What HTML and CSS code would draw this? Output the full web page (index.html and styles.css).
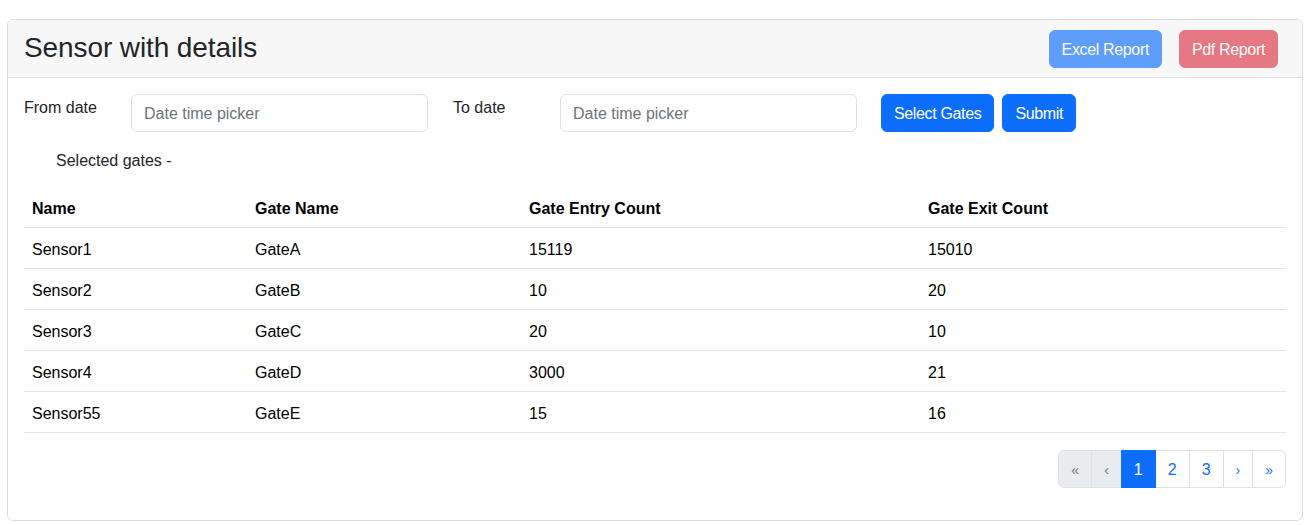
FILE: index.html
```html
<!DOCTYPE html>
<html lang="en">
<head>
<meta charset="utf-8">
<title>Sensor with details</title>
<link rel="stylesheet" href="styles.css">
</head>
<body>
<div class="card">
  <div class="card-header">
    <h3 class="title">Sensor with details</h3>
    <div class="header-actions">
      <button class="btn btn-primary disabled">Excel Report</button>
      <button class="btn btn-danger disabled">Pdf Report</button>
    </div>
  </div>
  <div class="card-body">
    <div class="filters">
      <label class="filter-label">From date</label>
      <input class="form-control date-input" type="text" placeholder="Date time picker">
      <label class="filter-label to-label">To date</label>
      <input class="form-control date-input" type="text" placeholder="Date time picker">
      <div class="filter-actions">
        <button class="btn btn-primary">Select Gates</button>
        <button class="btn btn-primary">Submit</button>
      </div>
    </div>
    <p class="selected">Selected gates -</p>
    <table class="table">
      <colgroup>
        <col class="c1"><col class="c2"><col class="c3"><col class="c4">
      </colgroup>
      <thead>
        <tr><th>Name</th><th>Gate Name</th><th>Gate Entry Count</th><th>Gate Exit Count</th></tr>
      </thead>
      <tbody>
        <tr><td>Sensor1</td><td>GateA</td><td>15119</td><td>15010</td></tr>
        <tr><td>Sensor2</td><td>GateB</td><td>10</td><td>20</td></tr>
        <tr><td>Sensor3</td><td>GateC</td><td>20</td><td>10</td></tr>
        <tr><td>Sensor4</td><td>GateD</td><td>3000</td><td>21</td></tr>
        <tr><td>Sensor55</td><td>GateE</td><td>15</td><td>16</td></tr>
      </tbody>
    </table>
    <div class="pager-row">
      <ul class="pagination">
        <li class="page-item disabled"><span class="page-link small-glyph">«</span></li>
        <li class="page-item disabled"><span class="page-link small-glyph">‹</span></li>
        <li class="page-item active"><span class="page-link">1</span></li>
        <li class="page-item"><span class="page-link">2</span></li>
        <li class="page-item"><span class="page-link">3</span></li>
        <li class="page-item"><span class="page-link small-glyph">›</span></li>
        <li class="page-item"><span class="page-link small-glyph">»</span></li>
      </ul>
    </div>
  </div>
</div>
</body>
</html>
```

FILE: styles.css
```css
* { box-sizing: border-box; }

body {
  margin: 0;
  font-family: "Liberation Sans", Arial, sans-serif;
  font-size: 16px;
  line-height: 1.5;
  color: #212529;
  background: #fff;
}

.card {
  margin: 19px 10px 0 7px;
  border: 1px solid #dcdcdc;
  border-radius: 6px;
  background: #fff;
}

.card-header {
  display: flex;
  align-items: center;
  justify-content: space-between;
  padding: 10px 24px 9px 16px;
  background: #f7f7f7;
  border-bottom: 1px solid #dcdcdc;
  border-radius: 5px 5px 0 0;
}

.title {
  margin: 0;
  font-size: 28px;
  font-weight: 400;
  line-height: 1.2;
  color: #212529;
  padding-bottom: 3px;
  letter-spacing: -0.1px;
}

.header-actions {
  display: flex;
  gap: 17px;
}

.btn {
  font-family: inherit;
  font-size: 16px;
  line-height: 24px;
  padding: 7px 12px 5px;
  border: 1px solid transparent;
  border-radius: 6px;
  color: #fff;
  cursor: pointer;
  letter-spacing: -0.35px;
}

.btn-primary { background: #0d6efd; border-color: #0d6efd; }
.btn-danger { background: #dc3545; border-color: #dc3545; }
.btn.disabled { opacity: 0.65; }

.card-body {
  padding: 16px 16px 32px 16px;
}

.filters {
  display: flex;
  align-items: flex-start;
}

.filter-label {
  width: 107px;
  padding-top: 2px;
  line-height: 24px;
}

.to-label { width: 107px; margin-left: 25px; }

.form-control {
  font-family: inherit;
  font-size: 16px;
  line-height: 24px;
  height: 38px;
  padding: 7px 12px 5px;
  border: 1px solid #dee2e6;
  border-radius: 6px;
  color: #212529;
  background: #fff;
}

.form-control::placeholder { color: #6c757d; }

.date-input { width: 297px; }

.filter-actions {
  display: flex;
  gap: 8px;
  margin-left: 24px;
}

.selected {
  margin: 17px 0 14px 32px;
  line-height: 24px;
}

.table {
  width: 100%;
  border-collapse: collapse;
  margin-bottom: 17px;
}

.c1 { width: 223px; }
.c2 { width: 274px; }
.c3 { width: 399px; }

.table th, .table td {
  text-align: left;
  padding: 10px 8px 6px;
  line-height: 24px;
  border-bottom: 1px solid #dee2e6;
  color: #000;
}

.table th { font-weight: 700; }

.pager-row {
  display: flex;
  justify-content: flex-end;
}

.pagination {
  display: flex;
  list-style: none;
  margin: 0;
  padding: 0;
}

.page-link {
  display: block;
  height: 38px;
  padding: 7px 12px 5px;
  line-height: 24px;
  color: #0d6efd;
  background: #fff;
  border: 1px solid #dee2e6;
  margin-left: -1px;
}

.page-item:first-child .page-link {
  margin-left: 0;
  border-radius: 6px 0 0 6px;
}

.page-item:last-child .page-link { border-radius: 0 6px 6px 0; }

.page-item.disabled .page-link {
  color: #6c757d;
  background: #e9ecef;
}

.page-item.active .page-link {
  background: #0d6efd;
  border-color: #0d6efd;
  color: #fff;
  position: relative;
}

.small-glyph { font-size: 14px; padding: 7px 12px 5px; line-height: 25px; }
```
